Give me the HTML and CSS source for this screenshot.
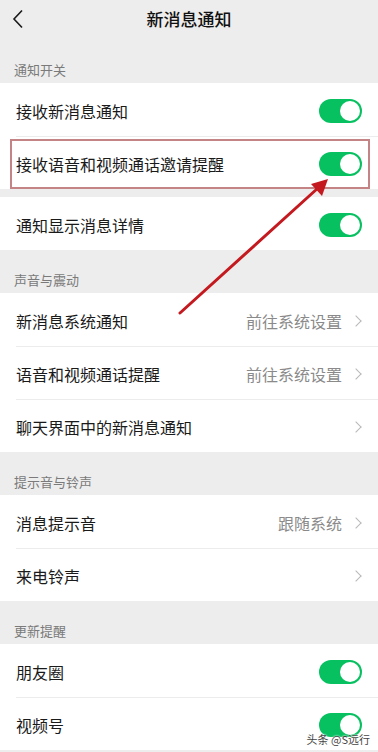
FILE: index.html
```html
<!DOCTYPE html>
<html lang="zh-CN">
<head>
<meta charset="utf-8">
<title>新消息通知</title>
<link rel="stylesheet" href="styles.css">
</head>
<body>
<div class="page">
  <header class="topbar">
    <span class="back">
      <svg width="12" height="20" viewBox="0 0 12 20"><path d="M10 1.5 L2 10 L10 18.5" fill="none" stroke="#1a1a1a" stroke-width="1.6"/></svg>
    </span>
    <h1 class="title">新消息通知</h1>
  </header>

  <div class="sec-label">通知开关</div>
  <div class="group">
    <div class="row"><span class="text">接收新消息通知</span><span class="switch"></span></div>
    <div class="row row-marked"><span class="text">接收语音和视频通话邀请提醒</span><span class="switch"></span></div>
  </div>
  <div class="group group-gap">
    <div class="row"><span class="text">通知显示消息详情</span><span class="switch"></span></div>
  </div>

  <div class="sec-label">声音与震动</div>
  <div class="group">
    <div class="row"><span class="text">新消息系统通知</span><span class="value">前往系统设置</span><span class="chev"></span></div>
    <div class="row"><span class="text">语音和视频通话提醒</span><span class="value">前往系统设置</span><span class="chev"></span></div>
    <div class="row"><span class="text">聊天界面中的新消息通知</span><span class="chev"></span></div>
  </div>

  <div class="sec-label">提示音与铃声</div>
  <div class="group">
    <div class="row"><span class="text">消息提示音</span><span class="value">跟随系统</span><span class="chev"></span></div>
    <div class="row"><span class="text">来电铃声</span><span class="chev"></span></div>
  </div>

  <div class="sec-label">更新提醒</div>
  <div class="group">
    <div class="row"><span class="text">朋友圈</span><span class="switch"></span></div>
    <div class="row"><span class="text">视频号</span><span class="switch"></span></div>
  </div>

  <svg class="arrow" width="378" height="752" viewBox="0 0 378 752">
    <line x1="180" y1="313" x2="318" y2="188" stroke="#c3191f" stroke-width="3" stroke-linecap="round"/>
    <polygon points="328,179 311,184 322,196" fill="#c3191f"/>
  </svg>

  <div class="watermark">头条 @S远行</div>
</div>
</body>
</html>
```

FILE: styles.css
```css
* { box-sizing: border-box; margin: 0; padding: 0; }
html, body { background: #ededed; }
body {
  font-family: "Noto Sans CJK SC", "Noto Sans", sans-serif;
  color: #1a1a1a;
}
.page {
  position: relative;
  width: 378px;
  height: 752px;
  overflow: hidden;
  background: #ededed;
}
.topbar {
  height: 40px;
  display: flex;
  align-items: center;
  justify-content: center;
  position: relative;
}
.back {
  position: absolute;
  left: 12px;
  top: 9px;
  display: flex;
}
.title {
  font-size: 17px;
  font-weight: 500;
  color: #111;
  line-height: 20px;
  margin-top: -2px;
}
.sec-label {
  height: 43px;
  display: flex;
  align-items: flex-end;
  padding: 0 0 4px 14px;
  font-size: 13px;
  line-height: 18px;
  color: #7a7a7a;
}
.group {
  background: #fff;
}
.group-gap {
  margin-top: 8px;
}
.row {
  position: relative;
  height: 53px;
  display: flex;
  align-items: center;
  padding: 2px 16px 0 16px;
  font-size: 16px;
}
.row + .row::before {
  content: "";
  position: absolute;
  left: 16px;
  right: 0;
  top: 0;
  height: 1px;
  background: #ececec;
}
.text {
  flex: 1;
  line-height: 22px;
}
.value {
  color: #8a8a8a;
  line-height: 22px;
}
.chev {
  width: 8px;
  height: 8px;
  border-top: 1.5px solid #b8b8b8;
  border-right: 1.5px solid #b8b8b8;
  transform: rotate(45deg);
  margin: 0 2px 0 10px;
}
.switch {
  position: relative;
  width: 43px;
  height: 24px;
  border-radius: 12px;
  background: #07c160;
}
.switch::after {
  content: "";
  position: absolute;
  right: 2px;
  top: 2px;
  width: 20px;
  height: 20px;
  border-radius: 50%;
  background: #fff;
}
.row-marked::after {
  content: "";
  position: absolute;
  left: 10px;
  right: 8px;
  top: 3px;
  bottom: 0;
  border: 2px solid #c48485;
}
.arrow {
  position: absolute;
  left: 0;
  top: 0;
  pointer-events: none;
}
.watermark {
  position: absolute;
  right: 8px;
  bottom: 6px;
  font-size: 11px;
  line-height: 14px;
  color: #444;
  text-shadow: 0 0 2px #fff, 0 0 2px #fff;
}
```
